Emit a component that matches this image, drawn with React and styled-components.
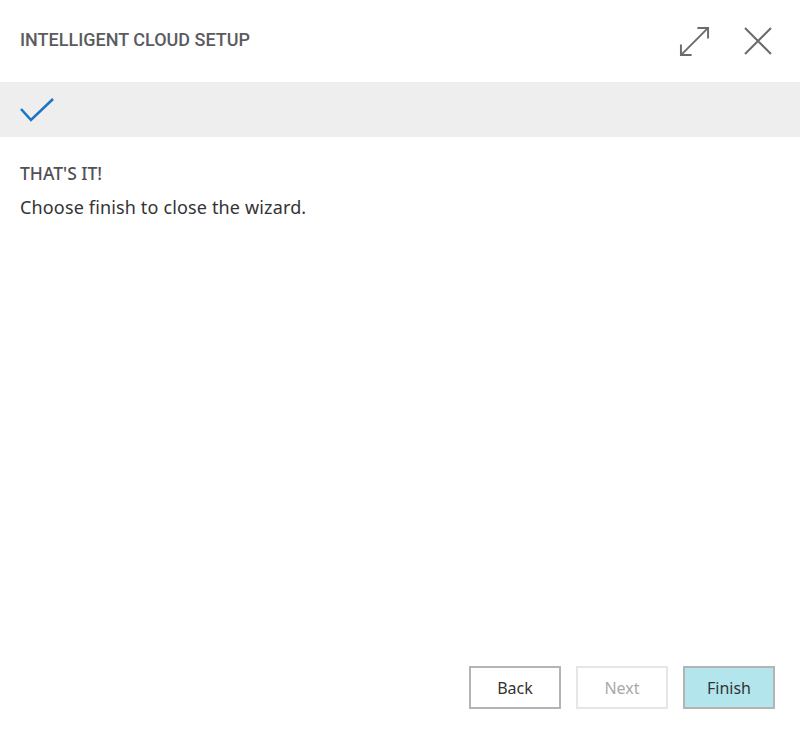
import React from 'react';
import styled, { createGlobalStyle } from 'styled-components';

const GlobalStyle = createGlobalStyle`
  html, body {
    margin: 0;
    padding: 0;
    background: #fff;
  }
`;

const Dialog = styled.div`
  width: 800px;
  height: 734px;
  display: flex;
  flex-direction: column;
  background: #fff;
  font-family: "Noto Sans", "Open Sans", sans-serif;
`;

const Header = styled.div`
  height: 82px;
  display: flex;
  align-items: center;
  justify-content: space-between;
  padding: 0 28px 0 20px;
  box-sizing: border-box;
`;

const Title = styled.h1`
  margin: 0 0 4px;
  font-family: Roboto, "Liberation Sans", sans-serif;
  font-weight: 500;
  font-size: 18px;
  letter-spacing: 0;
  color: #5b5b5f;
`;

const HeaderActions = styled.div`
  display: flex;
  align-items: center;
  gap: 34px;
`;

const IconButton = styled.button`
  border: none;
  background: none;
  padding: 0;
  display: flex;
  cursor: pointer;
`;

const StepBand = styled.div`
  height: 55px;
  background: #eeeeee;
  display: flex;
  align-items: center;
  padding-left: 20px;
`;

const Content = styled.div`
  flex: 1;
  padding: 24px 20px 0;
`;

const Heading = styled.h2`
  margin: 0 0 10px;
  font-size: 17.5px;
  font-weight: 500;
  color: #505058;
  letter-spacing: 0;
`;

const Text = styled.p`
  margin: 0;
  font-size: 18px;
  letter-spacing: 0.15px;
  color: #333;
`;

const Footer = styled.div`
  display: flex;
  justify-content: flex-end;
  gap: 15px;
  padding: 0 25px 25px;
`;

const Button = styled.button`
  width: 92px;
  height: 43px;
  box-sizing: border-box;
  font-family: "Noto Sans", "Open Sans", sans-serif;
  font-size: 16px;
  border: 2px solid ${p => (p.$disabled ? '#e6e6e6' : '#b4b4b4')};
  background: ${p => (p.$primary ? '#b2e6ec' : '#fff')};
  color: ${p => (p.$disabled ? '#a9a9a9' : '#333')};
  cursor: ${p => (p.$disabled ? 'default' : 'pointer')};
`;

const App = () => (
  <>
    <GlobalStyle />
    <Dialog>
      <Header>
        <Title>INTELLIGENT CLOUD SETUP</Title>
        <HeaderActions>
          <IconButton aria-label="Expand">
            <svg width="31" height="31" viewBox="0 0 32 32" fill="none" stroke="#6b6b6b" strokeWidth="2">
              <path d="M2 30 L30 2" />
              <path d="M19 2 H30 V13" />
              <path d="M2 19 V30 H13" />
            </svg>
          </IconButton>
          <IconButton aria-label="Close">
            <svg width="28" height="28" viewBox="0 0 28 28" fill="none" stroke="#6b6b6b" strokeWidth="2">
              <path d="M1 1 L27 27 M27 1 L1 27" />
            </svg>
          </IconButton>
        </HeaderActions>
      </Header>
      <StepBand>
        <svg width="34" height="24" viewBox="0 0 34 24" fill="none" stroke="#1a76c4" strokeWidth="2.6">
          <path d="M1 11 L11 22 L33 1" />
        </svg>
      </StepBand>
      <Content>
        <Heading>THAT'S IT!</Heading>
        <Text>Choose finish to close the wizard.</Text>
      </Content>
      <Footer>
        <Button>Back</Button>
        <Button $disabled>Next</Button>
        <Button $primary>Finish</Button>
      </Footer>
    </Dialog>
  </>
);

export default App;
